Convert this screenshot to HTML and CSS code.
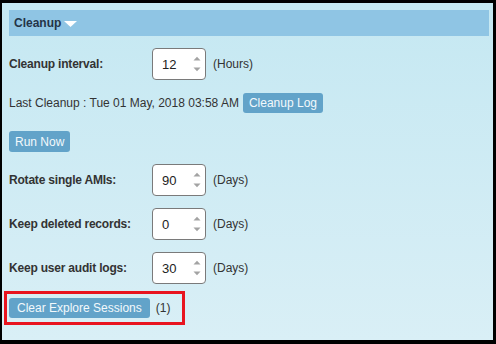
FILE: index.html
```html
<!DOCTYPE html>
<html lang="en">
<head>
    <meta charset="UTF-8">
    <title>Cleanup Settings</title>
    <link rel="stylesheet" href="styles.css">
</head>
<body>
    <div class="panel">
        <div class="panel-header">
            <span>Cleanup</span>
            <svg class="caret" width="13" height="6" viewBox="0 0 13 6"><path d="M0 0 L13 0 L6.5 6 Z" fill="#fff"/></svg>
        </div>

        <div class="field-row first">
            <label class="field-label">Cleanup interval:</label>
            <div class="spin-input">
                <span class="spin-value">12</span>
                <span class="spin-arrows">
                    <svg width="8" height="5" viewBox="0 0 8 5"><path d="M0.5 4.5 L4 0.8 L7.5 4.5 Z" fill="#a3a3a3"/></svg>
                    <svg width="8" height="5" viewBox="0 0 8 5"><path d="M0.5 0.5 L4 4.2 L7.5 0.5 Z" fill="#a3a3a3"/></svg>
                </span>
            </div>
            <span class="unit">(Hours)</span>
        </div>

        <div class="info-row">
            <span>Last Cleanup : Tue 01 May, 2018 03:58 AM</span>
            <button class="btn">Cleanup Log</button>
        </div>

        <div class="action-row">
            <button class="btn">Run Now</button>
        </div>

        <div class="field-row">
            <label class="field-label">Rotate single AMIs:</label>
            <div class="spin-input">
                <span class="spin-value">90</span>
                <span class="spin-arrows">
                    <svg width="8" height="5" viewBox="0 0 8 5"><path d="M0.5 4.5 L4 0.8 L7.5 4.5 Z" fill="#a3a3a3"/></svg>
                    <svg width="8" height="5" viewBox="0 0 8 5"><path d="M0.5 0.5 L4 4.2 L7.5 0.5 Z" fill="#a3a3a3"/></svg>
                </span>
            </div>
            <span class="unit">(Days)</span>
        </div>

        <div class="field-row">
            <label class="field-label">Keep deleted records:</label>
            <div class="spin-input">
                <span class="spin-value">0</span>
                <span class="spin-arrows">
                    <svg width="8" height="5" viewBox="0 0 8 5"><path d="M0.5 4.5 L4 0.8 L7.5 4.5 Z" fill="#a3a3a3"/></svg>
                    <svg width="8" height="5" viewBox="0 0 8 5"><path d="M0.5 0.5 L4 4.2 L7.5 0.5 Z" fill="#a3a3a3"/></svg>
                </span>
            </div>
            <span class="unit">(Days)</span>
        </div>

        <div class="field-row">
            <label class="field-label">Keep user audit logs:</label>
            <div class="spin-input">
                <span class="spin-value">30</span>
                <span class="spin-arrows">
                    <svg width="8" height="5" viewBox="0 0 8 5"><path d="M0.5 4.5 L4 0.8 L7.5 4.5 Z" fill="#a3a3a3"/></svg>
                    <svg width="8" height="5" viewBox="0 0 8 5"><path d="M0.5 0.5 L4 4.2 L7.5 0.5 Z" fill="#a3a3a3"/></svg>
                </span>
            </div>
            <span class="unit">(Days)</span>
        </div>

        <div class="highlight-box">
            <button class="btn">Clear Explore Sessions</button>
            <span class="count">(1)</span>
        </div>
    </div>
</body>
</html>
```

FILE: styles.css
```css
body {
    margin: 0;
    background-color: #000;
    font-family: "Liberation Sans", Arial, sans-serif;
    font-size: 12px;
    color: #333;
}
.panel {
    margin: 3px 3px 4px 2px;
    height: 337px;
    box-sizing: border-box;
    padding: 7px 4px 0 7px;
    background: linear-gradient(to bottom, #c5e8f2, #d9eff6);
    display: flex;
    flex-direction: column;
    align-items: flex-start;
}
.panel-header {
    align-self: stretch;
    height: 26px;
    background-color: #8fc5e4;
    display: flex;
    align-items: center;
    padding-left: 5px;
    font-weight: bold;
    color: #243447;
}
.caret {
    margin-left: 3px;
    margin-top: 1px;
}
.field-row {
    display: flex;
    align-items: center;
    height: 32px;
    margin-top: 12px;
}
.field-label {
    width: 143px;
    font-weight: bold;
    letter-spacing: -0.2px;
}
.spin-input {
    width: 54px;
    height: 32px;
    box-sizing: border-box;
    border: 1px solid #7a7a7a;
    border-radius: 4px;
    background-color: #fff;
    display: flex;
    align-items: center;
    padding-left: 9px;
    padding-right: 4px;
}
.spin-value {
    flex: 1;
    font-size: 13px;
    color: #222;
}
.spin-arrows {
    display: flex;
    flex-direction: column;
    gap: 6px;
}
.spin-arrows svg {
    display: block;
}
.unit {
    margin-left: 7px;
}
.info-row {
    display: flex;
    align-items: center;
    gap: 4px;
    margin-top: 13px;
}
.action-row {
    margin-top: 18px;
}
.btn {
    font-family: "Liberation Sans", Arial, sans-serif;
    font-size: 12px;
    color: #f2f9fc;
    background-color: #62a3c9;
    border: none;
    border-radius: 3px;
    height: 20px;
    padding: 0 6px;
    margin: 0;
}
.action-row .btn {
    height: 21px;
}
.highlight-box {
    display: flex;
    align-items: center;
    gap: 6px;
    margin: 7px 0 0 -5px;
    border: 3px solid #e8141f;
    padding: 4px 12px 4px 2px;
}
.highlight-box .btn {
    padding: 0 8px;
}
```
